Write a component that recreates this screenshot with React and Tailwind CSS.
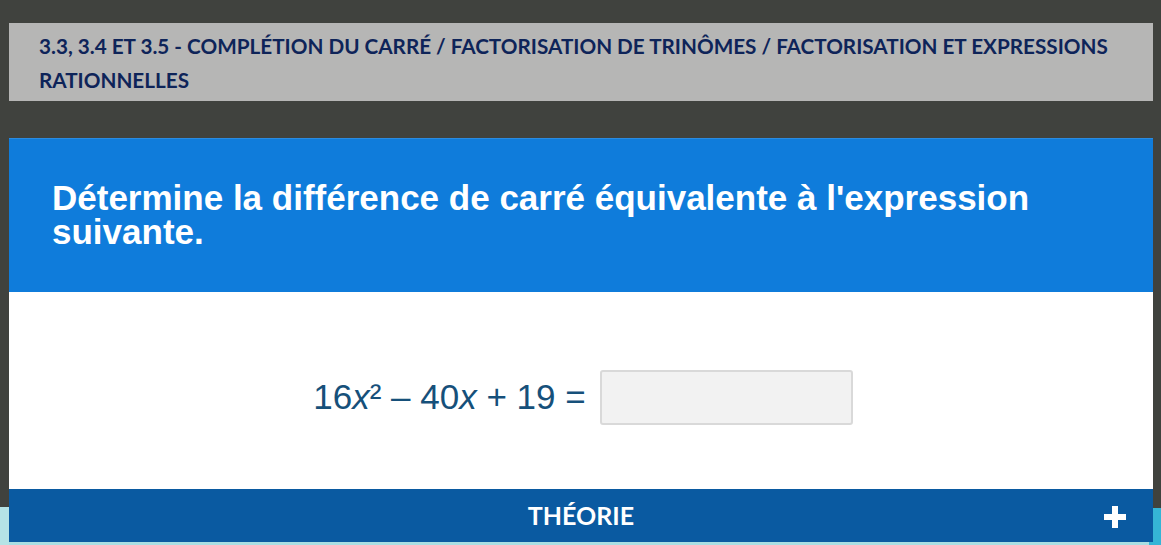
export default function App() {
  return (
    <div className="relative w-[1161px] h-[545px] overflow-hidden bg-[#40423e]">
      {/* cyan decoration bottom */}
      <div className="absolute left-0 bottom-0 w-full h-[4px] bg-[#a9dfe3]" />
      <div className="absolute left-0 top-[507px] w-[9px] h-[40px] bg-[#b5e3e6]" />
      <div className="absolute right-0 top-[508px] w-[12px] h-[40px] bg-[#35b5d6]" />
      <div className="relative flex flex-col pl-[9px] pr-[8px] pt-[23px]">
        <div className="bg-[#b6b6b5] h-[78px] pl-[30px] pr-[20px] pt-[6px]">
          <p className="text-[20.7px] leading-[34px] font-bold text-[#0e2459]" style={{ fontFamily: "Lato, 'Open Sans', sans-serif" }}>
            3.3, 3.4 ET 3.5 - COMPLÉTION DU CARRÉ / FACTORISATION DE TRINÔMES / FACTORISATION ET EXPRESSIONS RATIONNELLES
          </p>
        </div>
        <div className="mt-[37px] flex flex-col">
          <div className="bg-[#0f7cdb] h-[154px] pl-[43px] pr-[40px] pt-[42px] border-t border-[#2b8be0]">
            <p className="text-[35px] leading-[34px] font-bold text-white" style={{ fontFamily: "'Liberation Sans', Arial, sans-serif" }}>
              Détermine la différence de carré équivalente à l'expression suivante.
            </p>
          </div>
          <div className="bg-white h-[197px] flex items-center justify-center pl-[4px] pt-[14px]">
            <div className="flex items-center gap-[14px] text-[35px] text-[#16507a]" style={{ fontFamily: "'Liberation Sans', Arial, sans-serif" }}>
              <span>
                16<i>x</i>² – 40<i>x</i> + 19 =
              </span>
              <div className="w-[253px] h-[55px] bg-[#f2f2f2] border-2 border-[#d9d9d9] rounded-[3px]" />
            </div>
          </div>
          <div className="relative bg-[#0a5aa1] h-[53px] flex items-center justify-center">
            <span className="text-[25px] font-bold text-white" style={{ fontFamily: "Lato, 'Open Sans', sans-serif" }}>
              THÉORIE
            </span>
            <svg className="absolute right-[27px] top-[17px]" width="22" height="22" viewBox="0 0 22 22">
              <rect x="8" y="0" width="6" height="22" fill="white" />
              <rect x="0" y="8" width="22" height="6" fill="white" />
            </svg>
          </div>
        </div>
      </div>
    </div>
  );
}
